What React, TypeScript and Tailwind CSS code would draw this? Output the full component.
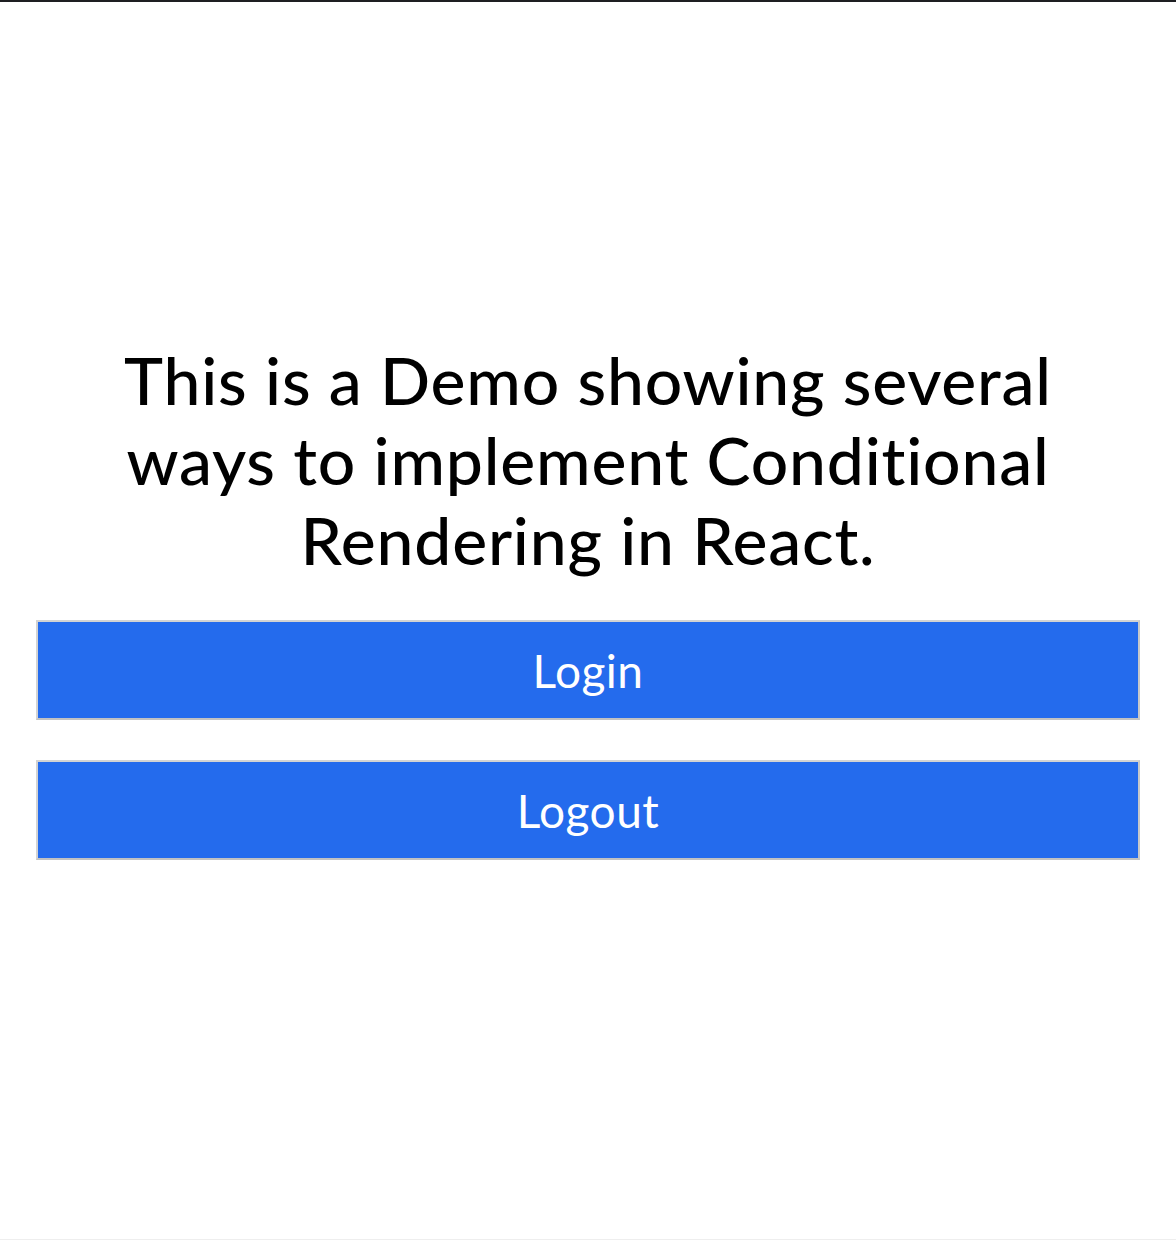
export default function App() {
  return (
    <div className="flex h-[1240px] w-full flex-col border-t-2 border-b border-t-[#1e1f22] border-b-[#eeeeee] bg-white font-['Lato','Noto_Sans',sans-serif] text-black">
      <div className="flex flex-col items-center px-9 pt-[338px]">
        <h1 className="text-center text-[66px] font-medium leading-[80px] tracking-[0.8px]">
          This is a Demo showing several
          <br />
          ways to implement Conditional
          <br />
          Rendering in React.
        </h1>
        <div className="mt-10 flex w-full flex-col gap-10">
          <button className="h-[100px] w-full border-2 border-[#d3d3d3] border-b-[#c2c2c2] border-r-[#c8c8c8] bg-[#246bed] text-[46px] tracking-[0.5px] text-white">
            Login
          </button>
          <button className="h-[100px] w-full border-2 border-[#d3d3d3] border-b-[#c2c2c2] border-r-[#c8c8c8] bg-[#246bed] text-[46px] tracking-[0.5px] text-white">
            Logout
          </button>
        </div>
      </div>
    </div>
  );
}
